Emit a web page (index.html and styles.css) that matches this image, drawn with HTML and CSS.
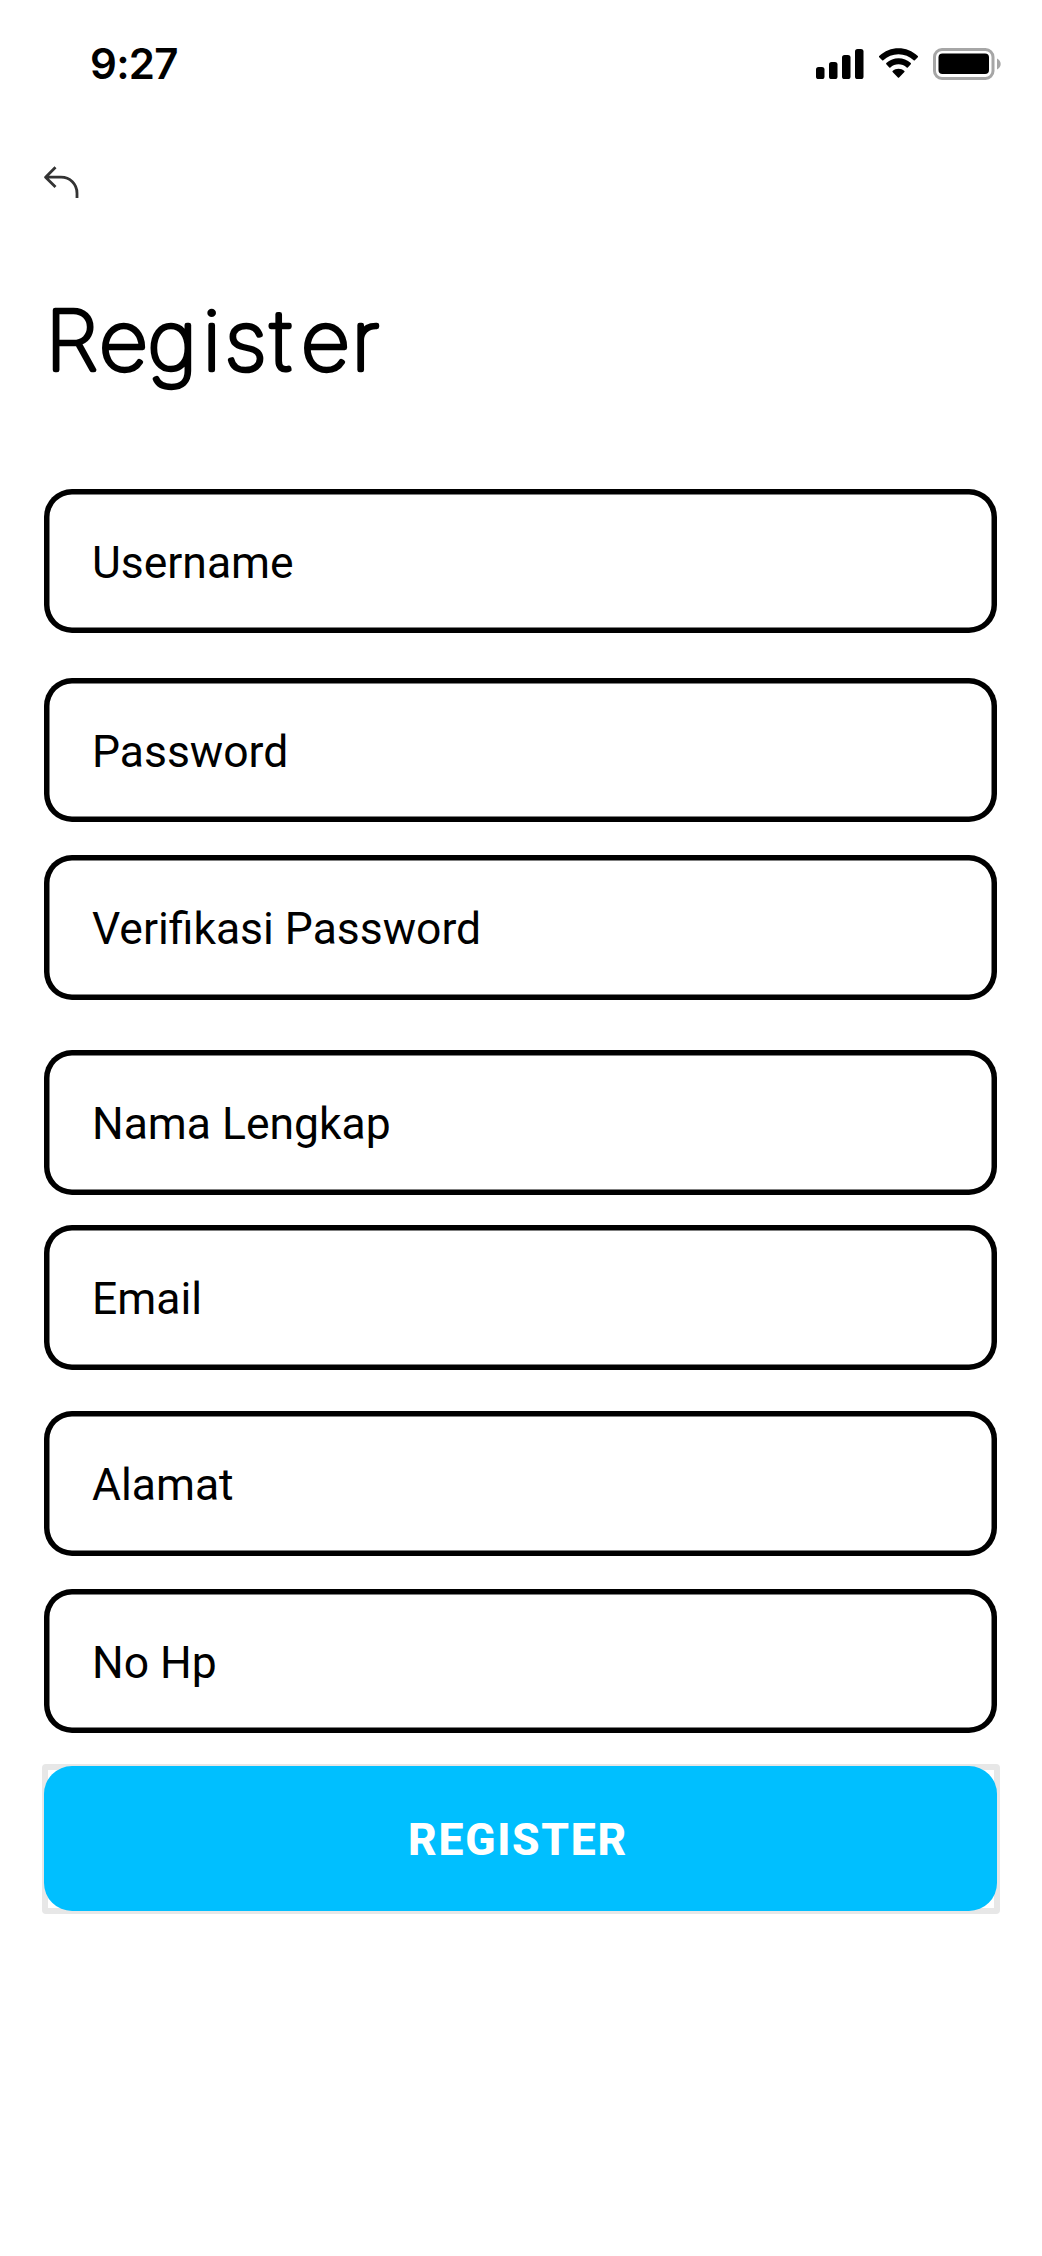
FILE: index.html
```html
<!DOCTYPE html>
<html lang="id">
<head>
<meta charset="utf-8">
<title>Register</title>
<link rel="stylesheet" href="styles.css">
</head>
<body>
<main class="screen">
  <header class="status">
    <span class="time">9:27</span>
    <div class="indicators">
      <svg class="signal" width="48" height="31" viewBox="0 0 48 31"><rect x="0" y="19" width="8.5" height="12" rx="2.6"/><rect x="13" y="14" width="8.5" height="17" rx="2.6"/><rect x="26" y="7" width="8.5" height="24" rx="2.6"/><rect x="39" y="1" width="8.5" height="30" rx="2.6"/></svg>
      <svg class="wifi" width="43" height="31" viewBox="0 0 43 31"><path d="M21.500 6.200c5.700 0 11.100 2.200 15.200 6.100.3.300.8.300 1.100 0l3-3c.3-.3.300-.8 0-1.200C30-2.400 13-2.400 2.200 8.100c-.3.300-.3.900 0 1.200l3 3c.3.300.8.300 1.100 0 4.100-3.900 9.500-6.100 15.200-6.100z"/><path d="M21.500 16.200c3 0 5.900 1.100 8.200 3.200.3.300.8.300 1.100 0l3-3.100c.3-.3.300-.8 0-1.200-6.900-6.600-17.600-6.600-24.500 0-.3.300-.3.900 0 1.200l3 3.100c.3.300.8.300 1.100 0 2.200-2.100 5.100-3.200 8.100-3.200z"/><path d="M27.400 22.900c.3.300.3.800 0 1.100l-5.300 5.500c-.3.300-.9.300-1.200 0L15.600 24c-.3-.3-.3-.8 0-1.100 3.400-2.900 8.400-2.900 11.800 0z"/></svg>
      <svg class="battery" width="69" height="32" viewBox="0 0 69 32"><rect x="1.500" y="1.500" width="58.500" height="29" rx="7.500" fill="none" stroke="#a6a6a6" stroke-width="3"/><rect x="5.500" y="5.500" width="50.500" height="20.500" rx="4"/><path d="M64 10.500v11c2.200-1 3.700-3 3.700-5.500s-1.500-4.500-3.700-5.500z" fill="#a6a6a6"/></svg>
    </div>
  </header>
  <svg class="back" width="36" height="33" viewBox="0 0 36 33"><path d="M11.500 1.300 1.600 11.200l9.900 9.900M1.600 11.200H17c9 0 16 7 16 16v4.800" fill="none" stroke="#333" stroke-width="2.800" stroke-linejoin="round"/></svg>
  <h1 class="title"><svg width="360" height="118" viewBox="0 0 360 118"><text class="title-text" transform="scale(1.04 1)" x="-1.400 50 96.600 149.500 170.700 214.900 244.200 292.800" y="86">Register</text></svg></h1>
  <form class="form">
    <div class="field">Username</div>
    <div class="field gap-l">Password</div>
    <div class="field gap-s">Verifikasi Password</div>
    <div class="field gap-xl">Nama Lengkap</div>
    <div class="field gap-xs">Email</div>
    <div class="field gap-m">Alamat</div>
    <div class="field gap-s">No Hp</div>
    <div class="submit-frame"><button class="submit" type="button">REGISTER</button></div>
  </form>
</main>
</body>
</html>
```
FILE: styles.css
```css
* { box-sizing: border-box; }
body { margin: 0; background: #fff; color: #000; font-family: Roboto, sans-serif; }
.screen { width: 1042px; height: 2256px; display: flex; flex-direction: column; overflow: hidden; }
.status { height: 127px; padding: 0 40px 0 90px; display: flex; justify-content: space-between; align-items: center; }
.time { font: 600 42px/50px Inter, sans-serif; letter-spacing: -0.7px; }
.indicators { display: flex; align-items: center; }
.wifi { margin-left: 13px; }
.battery { margin-left: 13px; }
.back { margin: 39px 0 0 44px; }
.title { margin: 85px 0 0 47px; height: 118px; }
.title svg { display: block; overflow: visible; }
.title-text { font: 100 82px Inter, sans-serif; stroke: #000; stroke-width: 4.6px; stroke-linejoin: round; stroke-linecap: round; }
.form { display: flex; flex-direction: column; margin: 87px 45px 0 44px; }
.field { height: 144.44px; border-radius: 28px; box-shadow: inset 0 0 0 5.5px #000; padding: 3px 48px 0; display: flex; align-items: center; font-size: 44.44px; }
.gap-xl { margin-top: 50.4px; }
.gap-l { margin-top: 44.4px; }
.gap-m { margin-top: 41.6px; }
.gap-s { margin-top: 33.2px; }
.gap-xs { margin-top: 30.6px; }
.submit-frame { margin: 30.6px -3px 0 -2px; height: 150px; border: 6px solid #e7e7e7; border-radius: 4px; }
.submit { display: block; width: 953px; height: 145px; margin: -4px 0 0 -4px; padding: 3px 5px 0 0; border: 0; border-radius: 28px; background: #00bfff; color: #fff; font: 800 44.44px Roboto, sans-serif; letter-spacing: 1.7px; }
```
